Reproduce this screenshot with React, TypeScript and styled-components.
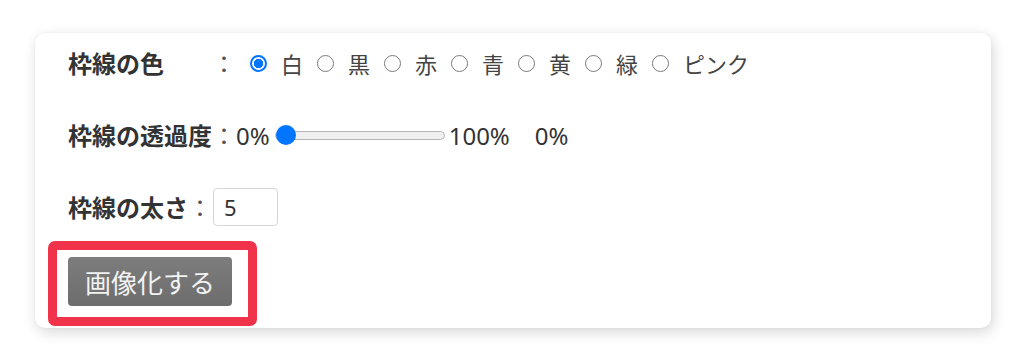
import React, { useState } from "react";
import styled, { createGlobalStyle } from "styled-components";

const Global = createGlobalStyle`
  html, body { margin: 0; padding: 0; background: #ffffff; }
  body { font-family: "Noto Sans", "Noto Sans CJK JP", sans-serif; color: #333; }
`;

const Page = styled.div`
  padding: 33px 0 0 35px;
  height: 361px;
  box-sizing: border-box;
`;

const Card = styled.div`
  width: 956px;
  box-sizing: border-box;
  background: #fff;
  border-radius: 10px;
  box-shadow: 2px 4px 14px rgba(0, 0, 0, 0.16), 0 0 2px rgba(0, 0, 0, 0.05);
  padding: 10px 33px 22px 33px;
  display: flex;
  flex-direction: column;
  align-items: flex-start;
`;

const Row = styled.div<{ $gap?: number }>`
  display: flex;
  align-items: center;
  height: 40px;
  margin-bottom: ${(p) => p.$gap ?? 32}px;
`;

const Label = styled.span<{ $w?: number }>`
  font-family: "Noto Sans CJK JP", sans-serif;
  font-weight: 700;
  font-size: 24px;
  line-height: 1;
  color: #333;
  min-width: ${(p) => (p.$w ? `${p.$w}px` : "auto")};
`;

const Colon = styled.span`
  font-family: "Noto Sans CJK JP", sans-serif;
  font-size: 24px;
  width: 24px;
  text-align: center;
  color: #555;
  line-height: 1;
`;

const Options = styled.div`
  display: flex;
  align-items: center;
  margin-left: 14px;
`;

const Option = styled.label`
  display: flex;
  align-items: center;
  margin-right: 14px;
  cursor: pointer;
`;

const Radio = styled.input`
  appearance: none;
  margin: 0 14px 0 0;
  width: 17px;
  height: 17px;
  border-radius: 50%;
  border: 1.3px solid #7a7a7a;
  box-sizing: border-box;
  background: #fff;
  &:checked {
    border: 2px solid #0075ff;
    background: radial-gradient(circle, #0075ff 0 4.4px, #fff 5px);
  }
`;

const OptText = styled.span`
  font-family: "Noto Sans CJK JP", sans-serif;
  font-size: 22px;
  color: #444;
  line-height: 1;
`;

const Num = styled.span<{ $ml?: number }>`
  font-family: "Noto Sans", sans-serif;
  font-size: 24px;
  color: #333;
  margin-left: ${(p) => p.$ml ?? 0}px;
`;

const Range = styled.input`
  appearance: none;
  -webkit-appearance: none;
  width: 170px;
  height: 20px;
  margin: 0 4px 0 5px;
  background: transparent;
  &::-webkit-slider-runnable-track {
    height: 9px;
    border-radius: 5px;
    background: #efefef;
    border: 1px solid #b5b5b5;
    box-sizing: border-box;
  }
  &::-webkit-slider-thumb {
    -webkit-appearance: none;
    width: 20px;
    height: 20px;
    border-radius: 50%;
    background: #0075ff;
    border: none;
    margin-top: -6.5px;
  }
`;

const NumInput = styled.input`
  width: 65px;
  height: 38px;
  box-sizing: border-box;
  margin-left: 1px;
  border: 1px solid #d6d6d6;
  border-radius: 4px;
  padding: 0 10px;
  font-family: "Noto Sans", sans-serif;
  font-size: 22px;
  color: #333;
  outline: none;
`;

const Highlight = styled.div`
  position: relative;
  margin-top: -2px;
  &::before {
    content: "";
    position: absolute;
    left: -20px;
    right: -25px;
    top: -16px;
    bottom: -20px;
    border: 9px solid #f0334a;
    border-radius: 7px;
    pointer-events: none;
  }
`;

const Button = styled.button`
  width: 164px;
  height: 49px;
  border: none;
  border-radius: 4px;
  background: linear-gradient(#7d7d7d, #6d6d6d);
  color: #f2f2f2;
  font-family: "Noto Sans CJK JP", sans-serif;
  font-size: 26px;
  padding: 0;
  display: flex;
  align-items: center;
  justify-content: center;
  cursor: pointer;
`;

const colors = ["白", "黒", "赤", "青", "黄", "緑", "ピンク"];

export default function App() {
  const [color, setColor] = useState("白");
  const [alpha, setAlpha] = useState(0);
  const [width, setWidth] = useState("5");
  return (
    <Page>
      <Global />
      <Card>
        <Row>
          <Label $w={144}>枠線の色</Label>
          <Colon>：</Colon>
          <Options>
            {colors.map((c) => (
              <Option key={c}>
                <Radio
                  type="radio"
                  name="color"
                  checked={color === c}
                  onChange={() => setColor(c)}
                />
                <OptText>{c}</OptText>
              </Option>
            ))}
          </Options>
        </Row>
        <Row>
          <Label>枠線の透過度</Label>
          <Colon>：</Colon>
          <Num>0%</Num>
          <Range
            type="range"
            min={0}
            max={100}
            value={alpha}
            onChange={(e) => setAlpha(Number(e.target.value))}
          />
          <Num>100%</Num>
          <Num $ml={25}>{alpha}%</Num>
        </Row>
        <Row $gap={32}>
          <Label>枠線の太さ</Label>
          <Colon>：</Colon>
          <NumInput value={width} onChange={(e) => setWidth(e.target.value)} />
        </Row>
        <Highlight>
          <Button>画像化する</Button>
        </Highlight>
      </Card>
    </Page>
  );
}
